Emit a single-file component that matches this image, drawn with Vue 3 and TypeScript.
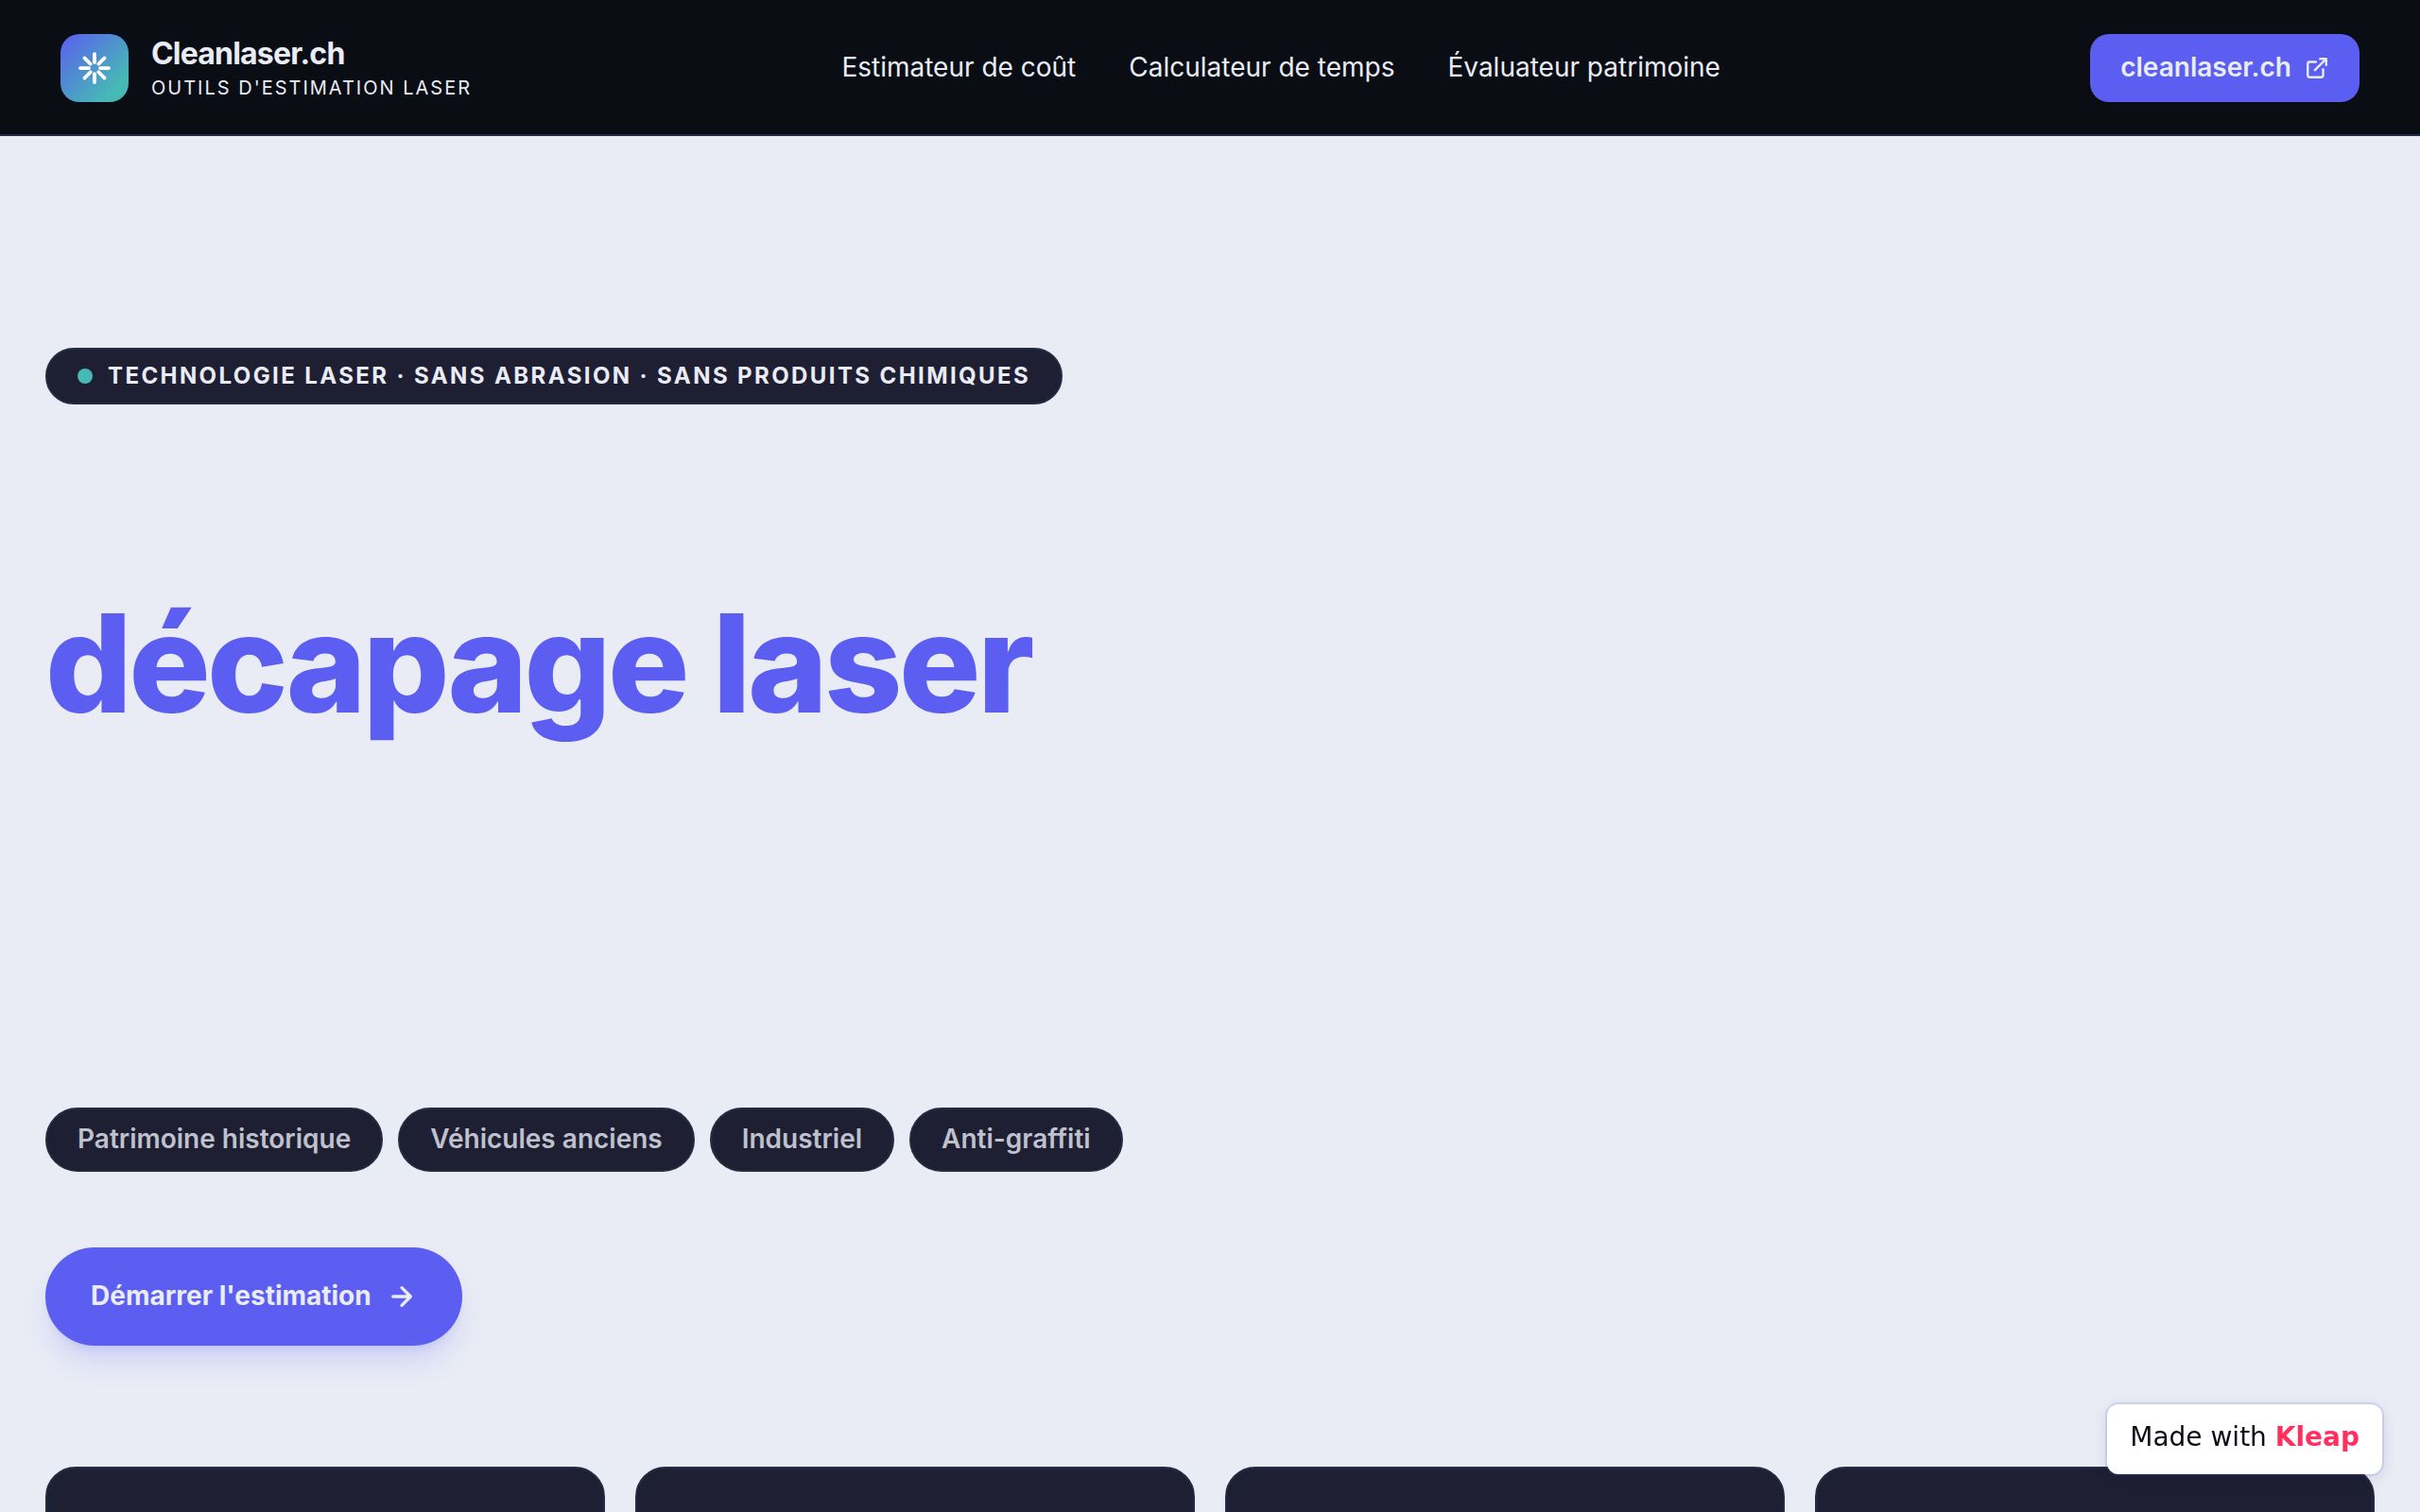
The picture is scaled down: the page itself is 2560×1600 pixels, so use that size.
<script setup lang="ts">
interface NavLink {
  label: string
  href: string
}

const navLinks: NavLink[] = [
  { label: 'Estimateur de coût', href: '#estimateur' },
  { label: 'Calculateur de temps', href: '#calculateur' },
  { label: 'Évaluateur patrimoine', href: '#patrimoine' },
]

const tags: string[] = ['Patrimoine historique', 'Véhicules anciens', 'Industriel', 'Anti-graffiti']

const cardCount = 4
</script>

<template>
  <div class="page">
    <header class="topbar">
      <a class="brand" href="#">
        <span class="brand-mark">
          <svg width="36" height="36" viewBox="0 0 24 24" fill="none" stroke="currentColor" stroke-width="2.5" stroke-linecap="round" aria-hidden="true">
            <path d="M12 2v6M12 16v6M2 12h6M16 12h6M4.93 4.93l4.24 4.24M14.83 14.83l4.24 4.24M4.93 19.07l4.24-4.24M14.83 9.17l4.24-4.24" />
          </svg>
        </span>
        <span class="brand-text">
          <span class="brand-name">Cleanlaser.ch</span>
          <span class="brand-sub">Outils d'estimation laser</span>
        </span>
      </a>
      <nav class="nav">
        <a v-for="link in navLinks" :key="link.href" :href="link.href">{{ link.label }}</a>
      </nav>
      <a class="site-link" href="#site">
        <span class="label">cleanlaser.ch</span>
        <svg width="26" height="26" viewBox="0 0 24 24" fill="none" stroke="currentColor" stroke-width="2.2" stroke-linecap="round" stroke-linejoin="round" aria-hidden="true">
          <path d="M18 13v6a2 2 0 0 1-2 2H5a2 2 0 0 1-2-2V8a2 2 0 0 1 2-2h6M15 3h6v6M10 14 21 3" />
        </svg>
      </a>
    </header>

    <main class="hero">
      <p class="eyebrow"><span class="dot"></span>Technologie laser · Sans abrasion · Sans produits chimiques</p>
      <h1>décapage laser</h1>
      <ul class="tags">
        <li v-for="tag in tags" :key="tag">{{ tag }}</li>
      </ul>
      <button class="cta" type="button">
        <span class="label">Démarrer l'estimation</span>
        <svg width="32" height="32" viewBox="0 0 24 24" fill="none" stroke="currentColor" stroke-width="2.5" stroke-linecap="round" stroke-linejoin="round" aria-hidden="true">
          <path d="M5 12h14M12 5l7 7-7 7" />
        </svg>
      </button>
      <div class="cards">
        <div v-for="n in cardCount" :key="n" class="card"></div>
      </div>
    </main>

    <a class="badge" href="#kleap">Made with <strong>Kleap</strong></a>
  </div>
</template>

<style>
body {
  margin: 0;
  background: #e9ecf5;
}
</style>

<style scoped>
.page {
  height: 100vh;
  overflow: hidden;
  background: #e9ecf5;
  color: #e9ecf5;
  font-family: Inter, "Liberation Sans", sans-serif;
  font-size: 28px;
  line-height: 40px;
}

a {
  color: inherit;
  text-decoration: none;
}

.topbar {
  display: flex;
  align-items: center;
  justify-content: space-between;
  padding: 36px 64px 34px;
  background: #0a0d14;
  border-bottom: 2px solid #252b42;
}

.brand {
  display: flex;
  align-items: center;
  gap: 24px;
}

.brand-mark {
  display: flex;
  align-items: center;
  justify-content: center;
  width: 72px;
  height: 72px;
  border-radius: 20px;
  background: linear-gradient(135deg, #5b5ef0, #46b9b5 80%);
  color: #fff;
}

.brand-text {
  display: flex;
  flex-direction: column;
}

.brand-name {
  font-size: 32px;
  font-weight: 700;
  line-height: 42px;
  letter-spacing: -0.025em;
}

.brand-sub {
  font-size: 20px;
  line-height: 30px;
  letter-spacing: 0.1em;
  text-transform: uppercase;
}

.nav {
  display: flex;
  gap: 56px;
  padding-bottom: 2px;
}

.label {
  line-height: 38px;
  padding-bottom: 2px;
}

.site-link {
  display: flex;
  align-items: center;
  gap: 14px;
  padding: 16px 32px;
  border-radius: 20px;
  background: #5b5ef0;
  font-weight: 600;
}

.hero {
  display: flex;
  flex-direction: column;
  align-items: flex-start;
  padding: 224px 48px 0;
}

.eyebrow {
  display: flex;
  align-items: center;
  gap: 16px;
  margin: 0;
  padding: 10px 32px;
  border: 2px solid #252b42;
  border-radius: 999px;
  background: #1e1f33;
  font-size: 24px;
  font-weight: 700;
  line-height: 36px;
  letter-spacing: 0.1em;
  text-transform: uppercase;
}

.dot {
  width: 16px;
  height: 16px;
  border-radius: 50%;
  background: #46b9b5;
}

h1 {
  margin: 198px 0 394px;
  color: #5b5ef0;
  font-size: 144px;
  font-weight: 800;
  line-height: 152px;
  letter-spacing: -0.025em;
}

.tags {
  display: flex;
  gap: 16px;
  margin: 0 0 80px;
  padding: 0;
  list-style: none;
}

.tags li {
  padding: 12px 32px 14px;
  border: 2px solid #252b42;
  border-radius: 999px;
  background: #1e1f33;
  color: #bfc1cd;
  font-weight: 600;
  line-height: 38px;
}

.cta {
  display: flex;
  align-items: center;
  gap: 16px;
  padding: 32px 48px;
  border: 0;
  border-radius: 999px;
  background: #5b5ef0;
  box-shadow: 0 20px 30px -6px rgba(91, 94, 240, 0.2), 0 8px 12px -8px rgba(91, 94, 240, 0.2);
  color: inherit;
  font: inherit;
  font-weight: 700;
}

.cards {
  display: grid;
  grid-template-columns: repeat(4, 1fr);
  gap: 32px;
  align-self: stretch;
  margin-top: 128px;
}

.card {
  min-height: 320px;
  border: 2px solid #252b42;
  border-radius: 32px;
  background: #1e1f33;
}

.badge {
  position: fixed;
  right: 40px;
  bottom: 40px;
  padding: 16px 24px 20px;
  border-radius: 12px;
  background: #fff;
  box-shadow: 0 0 0 2px rgba(91, 94, 240, 0.16), 0 4px 16px rgba(10, 13, 20, 0.12);
  color: #0a0d14;
  font-family: "DejaVu Sans", sans-serif;
  line-height: 38px;
}

.badge strong {
  color: #ff2f5f;
  font-weight: 700;
}
</style>
